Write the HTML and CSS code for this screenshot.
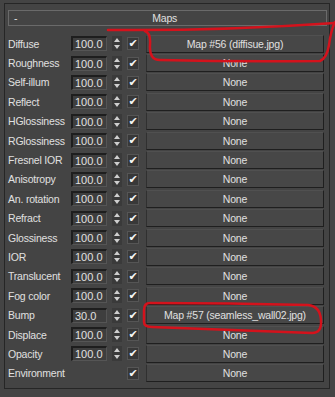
FILE: index.html
```html
<!DOCTYPE html>
<html lang="en">
<head>
    <meta charset="UTF-8">
    <title>Maps</title>
    <link rel="stylesheet" href="styles.css">
</head>
<body>
    <div class="panel">
        <div class="head">
            <span class="minus">-</span>
            <span class="title">Maps</span>
        </div>
        <div class="rows">
            <div class="row"><span class="label">Diffuse</span><span class="num">100.0</span><span class="spin"></span><span class="check">&#10004;</span><span class="map">Map #56 (diffisue.jpg)</span></div>
            <div class="row"><span class="label">Roughness</span><span class="num">100.0</span><span class="spin"></span><span class="check">&#10004;</span><span class="map">None</span></div>
            <div class="row"><span class="label">Self-illum</span><span class="num">100.0</span><span class="spin"></span><span class="check">&#10004;</span><span class="map">None</span></div>
            <div class="row"><span class="label">Reflect</span><span class="num">100.0</span><span class="spin"></span><span class="check">&#10004;</span><span class="map">None</span></div>
            <div class="row"><span class="label">HGlossiness</span><span class="num">100.0</span><span class="spin"></span><span class="check">&#10004;</span><span class="map">None</span></div>
            <div class="row"><span class="label">RGlossiness</span><span class="num">100.0</span><span class="spin"></span><span class="check">&#10004;</span><span class="map">None</span></div>
            <div class="row"><span class="label">Fresnel IOR</span><span class="num">100.0</span><span class="spin"></span><span class="check">&#10004;</span><span class="map">None</span></div>
            <div class="row"><span class="label">Anisotropy</span><span class="num">100.0</span><span class="spin"></span><span class="check">&#10004;</span><span class="map">None</span></div>
            <div class="row"><span class="label">An. rotation</span><span class="num">100.0</span><span class="spin"></span><span class="check">&#10004;</span><span class="map">None</span></div>
            <div class="row"><span class="label">Refract</span><span class="num">100.0</span><span class="spin"></span><span class="check">&#10004;</span><span class="map">None</span></div>
            <div class="row"><span class="label">Glossiness</span><span class="num">100.0</span><span class="spin"></span><span class="check">&#10004;</span><span class="map">None</span></div>
            <div class="row"><span class="label">IOR</span><span class="num">100.0</span><span class="spin"></span><span class="check">&#10004;</span><span class="map">None</span></div>
            <div class="row"><span class="label">Translucent</span><span class="num">100.0</span><span class="spin"></span><span class="check">&#10004;</span><span class="map">None</span></div>
            <div class="row"><span class="label">Fog color</span><span class="num">100.0</span><span class="spin"></span><span class="check">&#10004;</span><span class="map">None</span></div>
            <div class="row"><span class="label">Bump</span><span class="num">30.0</span><span class="spin"></span><span class="check">&#10004;</span><span class="map">Map #57 (seamless_wall02.jpg)</span></div>
            <div class="row"><span class="label">Displace</span><span class="num">100.0</span><span class="spin"></span><span class="check">&#10004;</span><span class="map">None</span></div>
            <div class="row"><span class="label">Opacity</span><span class="num">100.0</span><span class="spin"></span><span class="check">&#10004;</span><span class="map">None</span></div>
            <div class="row"><span class="label">Environment</span><span class="num blank"></span><span class="spin blank"></span><span class="check">&#10004;</span><span class="map">None</span></div>
        </div>
    </div>

    <!-- red marker scribbles on top of the screenshot -->
    <svg class="marks" width="335" height="397" viewBox="0 0 335 397">
        <path d="M108 30 Q220 31 335 23" />
        <path d="M145 31 Q151 33 150 45 Q149 60 160 60 Q240 62 320 61 Q327 58 329 45 Q331 30 335 22" />
        <path d="M150 303 Q144 303 144 310 L144 322 Q144 327 152 327 Q240 330 312 333 Q322 333 321 320 Q320 306 308 305 Q230 303 150 303 Z" />
    </svg>
</body>
</html>
```

FILE: styles.css
```css
*{
    padding: 0;
    margin: 0;
    box-sizing: border-box;
}
body{
    background: #444444;
    font-family: "Liberation Sans", Arial, sans-serif;
    font-size: 10.5px;
    letter-spacing: -0.2px;
    color: #e0e0e0;
    position: relative;
    width: 335px;
    height: 397px;
    overflow: hidden;
}
.panel{
    margin: 3px 0 0 4px;
    width: 326px;
    height: 386px;
    border: 1px solid #262626;
    padding: 6px 2px 0 3px;
}
.head{
    height: 16px;
    border: 1px solid #6a6a6a;
    display: flex;
    align-items: center;
}
.head .minus{
    padding-left: 5px;
}
.head .title{
    flex: 1;
    text-align: center;
    padding-right: 14px;
}
.rows{
    margin-top: 8px;
}
.row{
    display: flex;
    align-items: center;
    height: 19.4px;
}
.label{
    width: 63px;
    white-space: nowrap;
}
.num{
    width: 36px;
    height: 15px;
    line-height: 13px;
    background: #3e3e3e;
    border-top: 2px solid #1e1e1e;
    border-left: 2px solid #1e1e1e;
    border-bottom: 1px solid #555;
    border-right: 1px solid #555;
    padding-left: 2px;
    font-size: 11px;
    letter-spacing: 0;
}
.spin{
    width: 10px;
    height: 15px;
    margin-left: 5px;
    background: #3a3a3a;
    position: relative;
}
.spin::before,
.spin::after{
    content: "";
    position: absolute;
    left: 2px;
    border-left: 3px solid transparent;
    border-right: 3px solid transparent;
}
.spin::before{
    top: 2px;
    border-bottom: 4px solid #cfcfcf;
}
.spin::after{
    bottom: 2px;
    border-top: 4px solid #cfcfcf;
}
.blank{
    visibility: hidden;
}
.check{
    width: 12px;
    height: 13px;
    margin-left: 5px;
    background: #383838;
    border: 1px solid #555;
    color: #f4f4f4;
    font-family: "DejaVu Sans", sans-serif;
    font-size: 11px;
    font-weight: bold;
    line-height: 11px;
    letter-spacing: 0;
    text-align: center;
}
.map{
    width: 178px;
    height: 18px;
    margin-left: 7px;
    background: #474747;
    border-top: 1px solid #505050;
    border-left: 1px solid #303030;
    border-bottom: 1px solid #1f1f1f;
    border-right: 1px solid #1f1f1f;
    text-align: center;
    line-height: 16px;
    white-space: nowrap;
}
.marks{
    position: absolute;
    left: 0;
    top: 0;
    pointer-events: none;
}
.marks path{
    fill: none;
    stroke: #d4121c;
    stroke-width: 2.5;
    stroke-linecap: round;
    stroke-linejoin: round;
}
```
